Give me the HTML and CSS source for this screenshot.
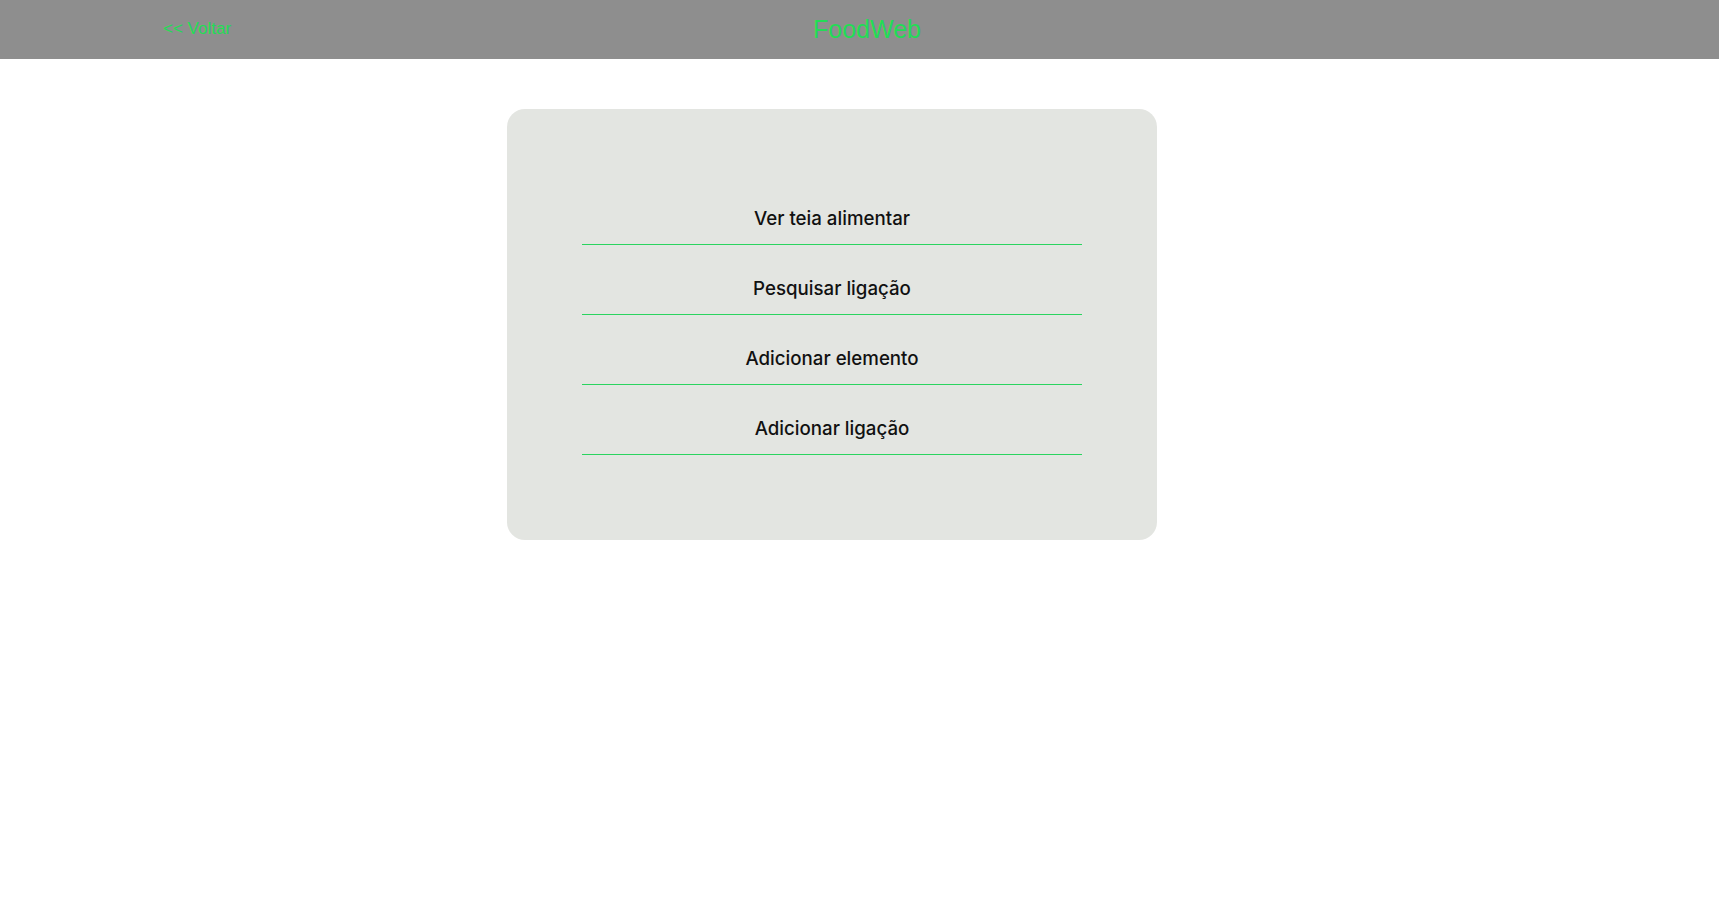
FILE: index.html
```html
<!DOCTYPE html>
<html lang="pt">
<head>
<meta charset="utf-8">
<title>FoodWeb</title>
<link rel="stylesheet" href="styles.css">
</head>
<body>
<header class="topbar">
  <a class="back" href="#">&lt;&lt; Voltar</a>
  <h1 class="brand">FoodWeb</h1>
  <span class="spacer"></span>
</header>
<main class="main">
  <nav class="card">
    <a class="item" href="#">Ver teia alimentar</a>
    <a class="item" href="#">Pesquisar ligação</a>
    <a class="item" href="#">Adicionar elemento</a>
    <a class="item" href="#">Adicionar ligação</a>
  </nav>
</main>
</body>
</html>
```

FILE: styles.css
```css
html, body {
  margin: 0;
  padding: 0;
  background: #ffffff;
}
.topbar {
  height: 59px;
  background: #8e8e8e;
  display: grid;
  grid-template-columns: 1fr auto 1fr;
  align-items: center;
  padding: 0 163px;
  font-family: "Liberation Sans", Arial, sans-serif;
}
.back {
  color: #22dd55;
  text-decoration: none;
  font-size: 17px;
  justify-self: start;
  margin-top: -1px;
}
.brand {
  margin: 0 0 0 15px;
  color: #22dd55;
  font-size: 25px;
  font-weight: 400;
  margin-top: -1px;
}
.main {
  display: flex;
  justify-content: flex-start;
  padding: 50px 0 0 507px;
}
.card {
  width: 650px;
  height: 431px;
  box-sizing: border-box;
  background: #e3e5e1;
  border-radius: 18px;
  padding-top: 66px;
  display: flex;
  flex-direction: column;
  align-items: center;
  font-family: Inter, "Noto Sans", sans-serif;
}
.item {
  width: 500px;
  display: block;
  text-align: center;
  text-decoration: none;
  color: #111111;
  font-size: 18.7px;
  font-weight: 500;
  line-height: 22px;
  padding: 33px 0 14px;
  border-bottom: 1px solid #2ad45f;
}
```
